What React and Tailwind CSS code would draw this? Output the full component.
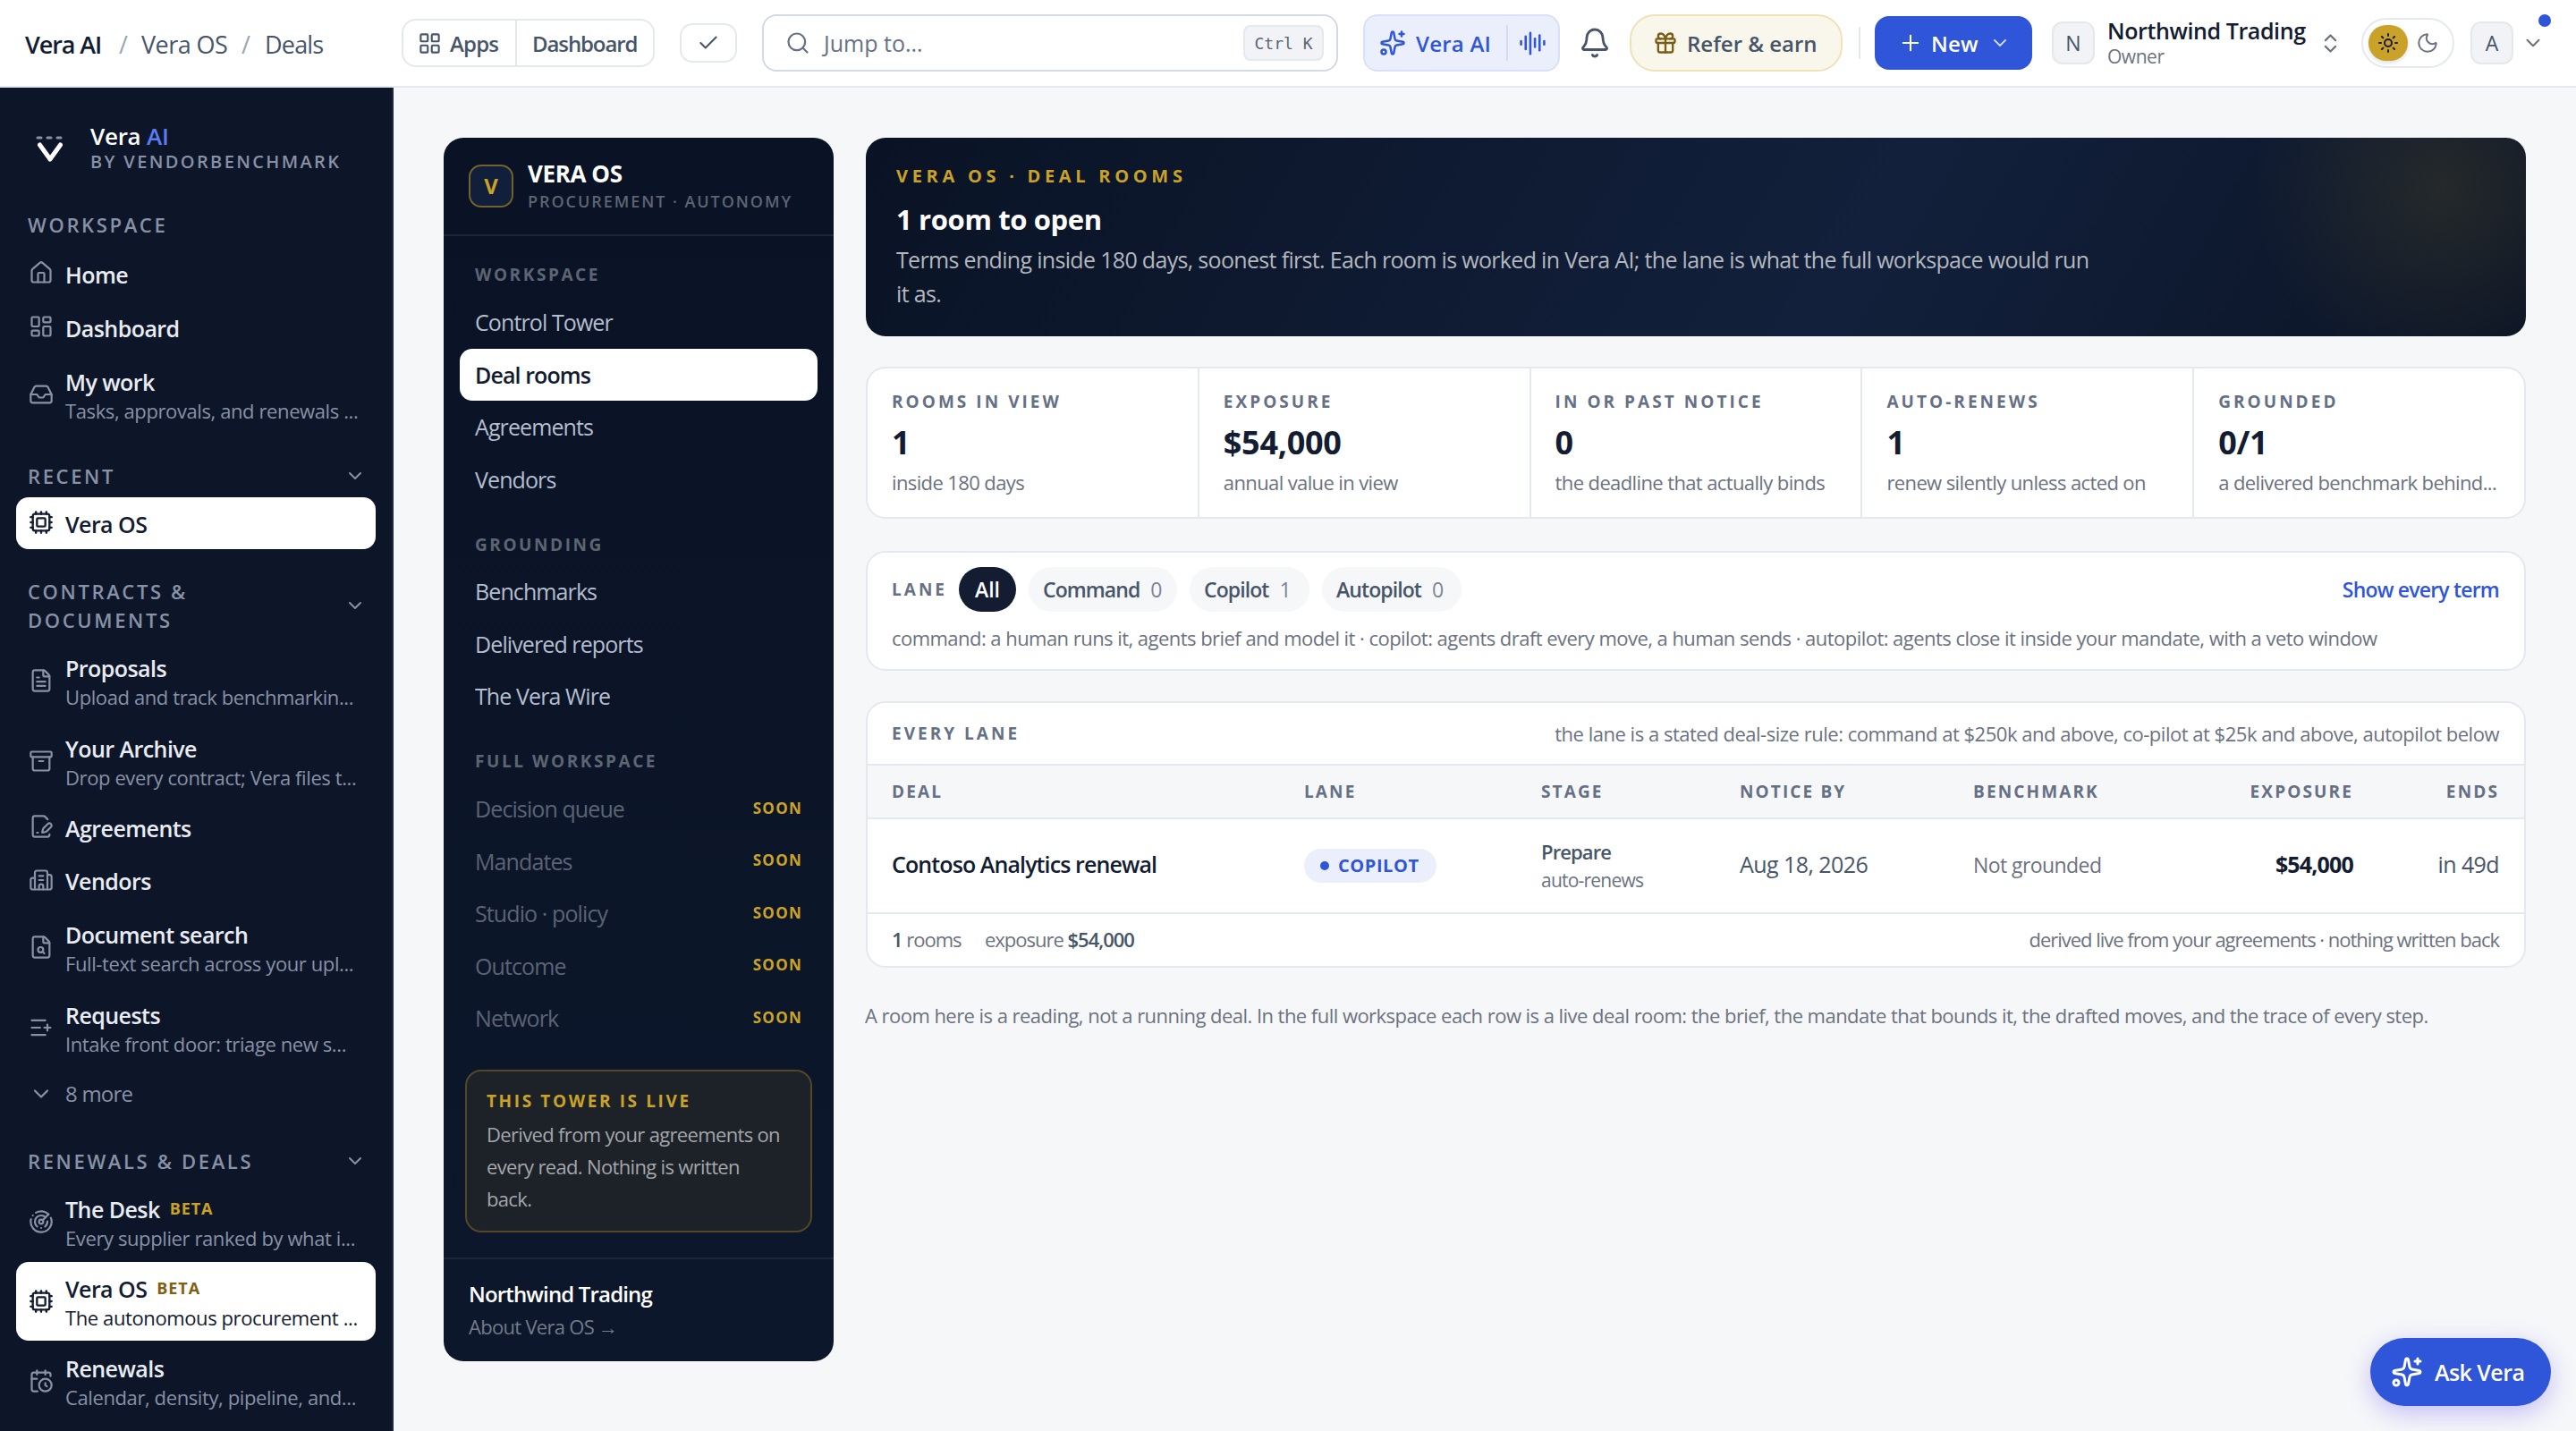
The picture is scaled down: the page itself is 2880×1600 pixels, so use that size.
import React from "react";
import {
  Archive, AudioLines, Bell, Building2, CalendarClock, Check, ChevronDown, ChevronsUpDown, Cpu, FilePenLine,
  FileSearch, FileText, Gift, House, Inbox, LayoutDashboard, LayoutGrid, ListPlus, Moon, Plus, Radar, Search,
  Sparkles, Sun,
} from "lucide-react";

/* ---------- Top bar ---------- */

function TopBar() {
  return (
    <header className="flex h-[98px] shrink-0 items-center border-b-2 border-[#e4e8ef] bg-white">
      <nav className="ml-[28px] flex w-[421px] items-center pt-[4px] text-[27px] leading-[40px] tracking-[-0.03em] text-[#475569]">
        <span className="w-[105px] font-semibold tracking-[-0.04em] text-[#131c31]">Vera AI</span>
        <span className="w-[25px] text-[#9aa3b2]">/</span>
        <span className="w-[112px] tracking-[-0.02em]">Vera OS</span>
        <span className="w-[26px] text-[#9aa3b2]">/</span>
        <span>Deals</span>
      </nav>

      <div className="flex h-[54px] w-[283px] items-center rounded-[16px] border-2 border-[#e4e8ef] text-[24px] font-semibold text-[#475569]">
        <div className="flex h-full w-[127px] items-center border-r-2 border-[#e4e8ef] pl-[16px]">
          <LayoutGrid size={27} strokeWidth={1.9} />
          <span className="ml-[9px] pt-px tracking-[-0.034em]">Apps</span>
        </div>
        <span className="ml-[17px] pt-px tracking-[-0.046em]">Dashboard</span>
      </div>

      <div className="ml-[28px] flex h-[44px] w-[64px] items-center justify-center rounded-[14px] border-2 border-[#e4e8ef] text-[#475569]">
        <Check size={26} strokeWidth={1.9} />
      </div>

      <div className="ml-[28px] flex h-[64px] w-[644px] items-center rounded-[16px] border-2 border-[#d3d9e6] pl-[24px] pr-[14px] text-[#667085]">
        <Search size={28} strokeWidth={1.9} />
        <span className="ml-[15px] grow pt-px text-[25px]">Jump to...</span>
        <kbd className="flex h-[40px] w-[90px] items-center justify-center rounded-[8px] border-2 border-[#e4e8ef] bg-[#f1f3f6] font-['DejaVu_Sans_Mono',monospace] text-[18px] text-[#5b6577]">
          Ctrl K
        </kbd>
      </div>

      <div className="ml-[28px] flex h-[64px] w-[220px] items-center rounded-[16px] border-2 border-[#d9e1fa] bg-[#ebeffc] pl-[16px] text-[#2f55d8]">
        <Sparkles size={30} strokeWidth={2} />
        <span className="ml-[11px] w-[101px] pt-px text-[24px] font-semibold tracking-[0.01em]">Vera AI</span>
        <span className="h-[40px] w-[2px] bg-[#d3dbf6]" />
        <AudioLines className="ml-[12px]" size={31} strokeWidth={2} />
      </div>

      <Bell className="ml-[21px] text-[#475569]" size={36} strokeWidth={1.9} />

      <div className="ml-[21px] flex h-[64px] w-[238px] items-center rounded-[28px] border-2 border-[#efe3b5] bg-[#f9f6ec] pl-[24px]">
        <Gift className="text-[#7a5c12]" size={28} strokeWidth={2} />
        <span className="ml-[10px] pt-px text-[24px] font-semibold text-[#475569]">Refer &amp; earn</span>
      </div>

      <span className="ml-[18px] h-[36px] w-[2px] bg-[#e4e8ef]" />

      <button className="ml-[16px] flex h-[60px] w-[176px] items-center rounded-[16px] bg-[#2f55d8] pl-[26px] text-white">
        <Plus size={28} strokeWidth={1.8} />
        <span className="ml-[9px] w-[65px] pt-px text-left text-[24px] font-semibold tracking-[0.01em]">New</span>
        <ChevronDown className="opacity-75" size={24} strokeWidth={2} />
      </button>

      <div className="ml-[22px] flex h-[48px] w-[48px] items-center justify-center rounded-[12px] border-2 border-[#e4e8ef] bg-[#f1f3f6] text-[23px] font-medium text-[#475569]">
        N
      </div>
      <div className="ml-[14px] flex w-[237px] flex-col">
        <span className="whitespace-nowrap text-[25px] font-semibold leading-[30px] tracking-[-0.016em] text-[#131c31]">Northwind Trading</span>
        <span className="text-[21px] leading-[28px] tracking-[-0.022em] text-[#6b7280]">Owner</span>
      </div>
      <ChevronsUpDown className="-ml-px text-[#6b7280]" size={27} strokeWidth={1.9} />

      <div className="ml-[21px] flex h-[56px] w-[104px] items-center rounded-full border-2 border-[#e4e8ef] pl-[6px]">
        <span className="flex h-[40px] w-[44px] items-center justify-center rounded-full bg-[#c9a227] text-[#131c31] shadow-[0_2px_4px_rgba(15,23,42,0.15)]">
          <Sun size={24} strokeWidth={2} />
        </span>
        <Moon className="ml-[9px] text-[#6b7280]" size={26} strokeWidth={1.9} />
      </div>

      <div className="relative ml-[18px] flex items-center">
        <div className="flex h-[48px] w-[48px] items-center justify-center rounded-[12px] border-2 border-[#e4e8ef] bg-[#f1f3f6] text-[23px] font-medium text-[#475569]">
          A
        </div>
        <ChevronDown className="ml-[9px] text-[#6b7280]" size={26} strokeWidth={1.9} />
        <span className="absolute -top-[8px] left-[76px] h-[14px] w-[14px] rounded-full bg-[#2f55d8]" />
      </div>
    </header>
  );
}

/* ---------- App sidebar ---------- */

function NavHeading({ children, chevron = true }) {
  return (
    <div className="flex items-center justify-between pl-[31px] pr-[29px] text-[#8891a5]">
      <span className="w-[260px] text-[22px] font-semibold leading-[32px] tracking-[0.12em]">{children}</span>
      {chevron && <ChevronDown size={24} strokeWidth={2} />}
    </div>
  );
}

function NavItem({ icon: Icon, title, sub, beta, active }) {
  const tone = active ? "bg-white" : "";
  return (
    <div className={`mx-[18px] flex items-center rounded-[14px] pl-[14px] ${sub ? "h-[88px]" : "h-[58px]"} ${tone}`}>
      <Icon
        className={`shrink-0 ${sub ? "" : "-mt-[2px]"} ${active ? "text-[#131c31]" : "text-[#8891a5]"}`}
        size={28}
        strokeWidth={active ? 2 : 1.9}
      />
      <div className={`ml-[13px] flex flex-col whitespace-nowrap ${sub ? "pt-[3px]" : "pt-px"}`}>
        <span className="flex items-center">
          <span
            className={`text-[25px] font-semibold leading-[34px] tracking-[-0.022em] ${active ? "text-[#131c31]" : "text-[#e9ecf2]"}`}
          >
            {title}
          </span>
          {beta && (
            <span className={`-mt-[2px] ml-[11px] text-[18px] font-bold leading-[30px] tracking-[0.05em] ${active ? "text-[#806012]" : "text-[#c9a227]"}`}>
              BETA
            </span>
          )}
        </span>
        {sub && (
          <span className={`text-[22px] font-medium leading-[31px] tracking-[-0.018em] ${active ? "text-[#131c31]" : "text-[#8891a5]"}`}>
            {sub}
          </span>
        )}
      </div>
    </div>
  );
}

function Sidebar() {
  return (
    <aside className="flex w-[440px] shrink-0 flex-col overflow-hidden border-r-2 border-[#1d263a] bg-[#0d1629]">
      <div className="flex pl-[40px] pt-[38px]">
        <svg className="mt-[15px]" width="32" height="32" viewBox="0 0 32 32" fill="none" strokeLinecap="round">
          <path d="M2 3h4M13 3h4M24 3h4" stroke="#8891a5" strokeWidth="3" />
          <path d="M4.500 11l11.500 16L27.500 11" stroke="#fff" strokeWidth="5" strokeLinejoin="round" />
        </svg>
        <div className="ml-[29px] flex flex-col whitespace-nowrap">
          <span className="text-[26px] font-semibold leading-[32px] tracking-[-0.01em] text-white">
            Vera <span className="text-[#5a7cf0]">AI</span>
          </span>
          <span className="text-[20px] font-semibold leading-[26px] tracking-[0.119em] text-[#8891a5]">BY VENDORBENCHMARK</span>
        </div>
      </div>

      <div className="mb-[10px] mt-[41px]"><NavHeading chevron={false}>WORKSPACE</NavHeading></div>
      <div className="flex flex-col gap-[2px]">
        <NavItem icon={House} title="Home" />
        <NavItem icon={LayoutDashboard} title="Dashboard" />
        <NavItem icon={Inbox} title="My work" sub="Tasks, approvals, and renewals ..." />
      </div>

      <div className="mb-[8px] mt-[31px]"><NavHeading>RECENT</NavHeading></div>
      <NavItem icon={Cpu} title="Vera OS" active />

      <div className="mb-[8px] mt-[31px]"><NavHeading>CONTRACTS &amp;<br />DOCUMENTS</NavHeading></div>
      <div className="flex flex-col gap-[1.500px]">
        <NavItem icon={FileText} title="Proposals" sub="Upload and track benchmarkin..." />
        <NavItem icon={Archive} title="Your Archive" sub="Drop every contract; Vera files t..." />
        <NavItem icon={FilePenLine} title="Agreements" />
        <NavItem icon={Building2} title="Vendors" />
        <NavItem icon={FileSearch} title="Document search" sub="Full-text search across your upl..." />
        <NavItem icon={ListPlus} title="Requests" sub="Intake front door: triage new s..." />
      </div>
      <div className="mt-[4px] flex h-[52px] items-center pl-[32px] text-[#8891a5]">
        <ChevronDown size={28} strokeWidth={1.9} />
        <span className="ml-[13px] text-[24px] font-medium tracking-[-0.032em]">8 more</span>
      </div>

      <div className="mb-[8px] mt-[33px]"><NavHeading>RENEWALS &amp; DEALS</NavHeading></div>
      <div className="flex flex-col gap-px">
        <NavItem icon={Radar} title="The Desk" sub="Every supplier ranked by what i..." beta />
        <NavItem icon={Cpu} title="Vera OS" sub="The autonomous procurement ..." beta active />
        <NavItem icon={CalendarClock} title="Renewals" sub="Calendar, density, pipeline, and..." />
      </div>
    </aside>
  );
}

/* ---------- Vera OS panel ---------- */

function OsGroup({ label, items, soon }) {
  return (
    <section className="pt-[29.400px]">
      <h3 className="ml-[35px] text-[19px] font-bold leading-[28px] tracking-[0.135em] text-[#5d6573]">{label}</h3>
      <div className="mt-[10.400px] flex flex-col gap-[0.500px]">
        {items.map((name) => {
          const active = name === "Deal rooms";
          return (
            <div
              key={name}
              className={`mx-[18px] flex h-[58px] items-center justify-between rounded-[14px] px-[17px] text-[25px] tracking-[-0.036em] ${
                active ? "bg-white font-semibold text-[#131c31]" : soon ? "text-[#5b6473]" : "text-[#b4becf]"
              }`}
            >
              <span>{name}</span>
              {soon && <span className="-mt-[3px] text-[17px] font-bold tracking-[0.074em] text-[#c9a227]">SOON</span>}
            </div>
          );
        })}
      </div>
    </section>
  );
}

function OsPanel() {
  return (
    <aside className="flex h-[1368px] w-[436px] shrink-0 flex-col rounded-[22px] bg-linear-to-b from-[#0a1325] to-[#0d172b]">
      <div className="flex h-[110px] items-center border-b-2 border-[#1e273a] pl-[28px]">
        <div className="flex h-[48px] w-[50px] items-center justify-center rounded-[14px] border-2 border-[#73622b] bg-[#121f3a] text-[24px] font-bold text-[#c9a227]">
          V
        </div>
        <div className="ml-[16px] flex flex-col gap-[3px] whitespace-nowrap">
          <span className="text-[26px] font-bold leading-[30px] tracking-[-0.015em] text-white">VERA OS</span>
          <span className="text-[18px] font-semibold leading-[26px] tracking-[0.108em] text-[#5d6573]">PROCUREMENT · AUTONOMY</span>
        </div>
      </div>

      <OsGroup label="WORKSPACE" items={["Control Tower", "Deal rooms", "Agreements", "Vendors"]} />
      <OsGroup label="GROUNDING" items={["Benchmarks", "Delivered reports", "The Vera Wire"]} />
      <OsGroup label="FULL WORKSPACE" items={["Decision queue", "Mandates", "Studio · policy", "Outcome", "Network"]} soon />

      <div className="mx-[24px] mt-[28px] h-[182px] rounded-[18px] border-2 border-[#544725] bg-[#1d2228] px-[22px] pt-[19px]">
        <div className="text-[19px] font-bold leading-[28px] tracking-[0.138em] text-[#c9a227]">THIS TOWER IS LIVE</div>
        <p className="mt-[5px] text-[22px] leading-[36px] tracking-[-0.03em] text-[#a3a6aa]">
          Derived from your agreements on<br />every read. Nothing is written<br />back.
        </p>
      </div>

      <div className="mt-[28px] border-t-2 border-[#1e273a] pl-[28px] pt-[22.500px]">
        <div className="text-[24px] font-semibold leading-[34px] tracking-[-0.035em] text-white">Northwind Trading</div>
        <div className="mt-[3px] text-[22px] leading-[32px] tracking-[-0.032em] text-[#737b89]">About Vera OS →</div>
      </div>
    </aside>
  );
}

/* ---------- Main column ---------- */

function Hero() {
  return (
    <section className="h-[222px] rounded-[22px] bg-[radial-gradient(circle_380px_at_95%_26%,rgba(201,162,39,0.13),rgba(201,162,39,0)_56%),linear-gradient(120deg,#0a1325_0%,#12203b_60%,#0b1426_100%)] pl-[34px] pt-[29px]">
      <div className="text-[20px] font-bold leading-[28px] tracking-[0.235em] text-[#c9a227]">VERA OS · DEAL ROOMS</div>
      <h1 className="mt-[13px] text-[31px] font-bold leading-[42px] tracking-[-0.012em] text-white">1 room to open</h1>
      <p className="mt-[5px] text-[25px] leading-[38px] tracking-[-0.027em] text-[#b3b7bf]">
        Terms ending inside 180 days, soonest first. Each room is worked in Vera AI; the lane is what the full workspace would run<br />it as.
      </p>
    </section>
  );
}

const STATS = [
  ["ROOMS IN VIEW", "1", "inside 180 days"],
  ["EXPOSURE", "$54,000", "annual value in view"],
  ["IN OR PAST NOTICE", "0", "the deadline that actually binds"],
  ["AUTO-RENEWS", "1", "renew silently unless acted on"],
  ["GROUNDED", "0/1", "a delivered benchmark behind..."],
];

function Stats() {
  return (
    <section className="mt-[34px] grid h-[170px] grid-cols-5 gap-[2px] overflow-hidden rounded-[22px] border-2 border-[#e4e8ef] bg-[#e4e8ef]">
      {STATS.map(([label, value, note]) => (
        <div key={label} className="flex flex-col whitespace-nowrap bg-white pl-[27px] pt-[23px]">
          <span className="text-[19px] font-bold leading-[28px] tracking-[0.16em] text-[#667085]">{label}</span>
          <span className="mt-[10px] text-[36px] font-bold leading-[44px] tracking-[-0.008em] text-[#131c31]">{value}</span>
          <span className="mt-[6px] text-[22px] leading-[32px] tracking-[-0.028em] text-[#6b7280]">{note}</span>
        </div>
      ))}
    </section>
  );
}

const LANES = [
  ["Command", "0", "w-[166px]"],
  ["Copilot", "1", "w-[134px]"],
  ["Autopilot", "0", "w-[156px]"],
];

function LaneFilter() {
  return (
    <section className="mt-[36px] h-[134px] rounded-[22px] border-2 border-[#e4e8ef] bg-white pl-[27px] pr-[28px] pt-[16px]">
      <div className="flex h-[50px] items-center text-[23px] font-semibold">
        <span className="w-[75px] text-[19px] font-bold tracking-[0.159em] text-[#667085]">LANE</span>
        <span className="flex h-full w-[64px] items-center justify-center rounded-full bg-[#131c31] text-white">All</span>
        <div className="ml-[14px] flex h-full gap-[14px]">
          {LANES.map(([name, count, width]) => (
            <span key={name} className={`flex items-center rounded-full bg-[#f6f7f9] pl-[16px] tracking-[-0.04em] text-[#475569] ${width}`}>
              {name}
              <span className="ml-[12px] font-medium text-[#7b8698]">{count}</span>
            </span>
          ))}
        </div>
        <span className="ml-auto tracking-[-0.035em] text-[#2f55d8]">Show every term</span>
      </div>
      <p className="mt-[13px] whitespace-nowrap text-[22px] leading-[32px] tracking-[-0.0245em] text-[#6b7280]">
        command: a human runs it, agents brief and model it · copilot: agents draft every move, a human sends · autopilot: agents close it inside your mandate, with a veto window
      </p>
    </section>
  );
}

const COLS = "grid grid-cols-[461px_265px_222px_261px_200px_225px_163px] items-center pl-[27px]";

function DealTable() {
  return (
    <section className="mt-[34px] overflow-hidden rounded-[22px] border-2 border-[#e4e8ef] bg-white">
      <div className="flex h-[68px] items-center justify-between pl-[27px] pr-[28px]">
        <span className="text-[19px] font-bold tracking-[0.159em] text-[#667085]">EVERY LANE</span>
        <span className="text-[22px] tracking-[-0.022em] text-[#6b7280]">
          the lane is a stated deal-size rule: command at $250k and above, co-pilot at $25k and above, autopilot below
        </span>
      </div>
      <div className={`${COLS} h-[62px] border-y-2 border-[#e4e8ef] bg-[#f6f7f9] text-[19px] font-bold tracking-[0.112em] text-[#667085]`}>
        <span>DEAL</span>
        <span>LANE</span>
        <span>STAGE</span>
        <span>NOTICE BY</span>
        <span>BENCHMARK</span>
        <span className="text-right">EXPOSURE</span>
        <span className="text-right">ENDS</span>
      </div>
      <div className={`${COLS} h-[104px] text-[25px] text-[#475569]`}>
        <span className="-mt-[3px] font-semibold tracking-[-0.036em] text-[#131c31]">Contoso Analytics renewal</span>
        <span className="flex h-[38px] w-[148px] items-center rounded-full bg-[#ebeffc] pl-[18px] text-[20px] font-bold tracking-[0.028em] text-[#2f55d8]">
          <span className="mr-[10px] h-[10px] w-[10px] rounded-full bg-[#2f55d8]" />
          COPILOT
        </span>
        <span className="flex flex-col leading-[32px]">
          <span className="text-[22px] font-semibold tracking-[-0.04em]">Prepare</span>
          <span className="text-[21px] tracking-[-0.037em] text-[#6b7280]">auto-renews</span>
        </span>
        <span className="-mt-[3px] tracking-[-0.022em]">Aug 18, 2026</span>
        <span className="-mt-[2px] text-[23px] tracking-[-0.025em] text-[#6b7280]">Not grounded</span>
        <span className="-mt-[3px] text-right font-bold tracking-[-0.033em] text-[#131c31]">$54,000</span>
        <span className="-mt-[3px] text-right tracking-[-0.024em]">in 49d</span>
      </div>
      <div className="flex h-[60px] items-center border-t-2 border-[#e4e8ef] pb-[2px] pl-[27px] pr-[28px] text-[22px] tracking-[-0.046em] text-[#6b7280]">
        <span className="w-[104px]"><b className="font-semibold text-[#475569]">1</b> rooms</span>
        <span>exposure <b className="font-semibold text-[#475569]">$54,000</b></span>
        <span className="ml-auto">derived live from your agreements · nothing written back</span>
      </div>
    </section>
  );
}

export default function App() {
  return (
    <div className="relative flex h-[1600px] w-[2880px] flex-col overflow-hidden bg-[#f6f7f9] font-['Open_Sans','Noto_Sans',sans-serif]">
      <TopBar />
      <div className="flex min-h-0 grow">
        <Sidebar />
        <div className="flex grow items-start pl-[56px] pr-[56px] pt-[56px]">
          <OsPanel />
          <main className="ml-[36px] flex min-w-0 grow flex-col">
            <Hero />
            <Stats />
            <LaneFilter />
            <DealTable />
            <p className="-ml-px mt-[37px] whitespace-nowrap text-[22px] leading-[32px] tracking-[-0.0245em] text-[#6b7280]">
              A room here is a reading, not a running deal. In the full workspace each row is a live deal room: the brief, the mandate that bounds it, the drafted moves, and the trace of every step.
            </p>
          </main>
        </div>
      </div>
      <button className="absolute bottom-[28px] right-[28px] flex h-[76px] w-[202px] items-center rounded-full bg-[#2f55d8] pl-[23px] text-white shadow-[0_8px_28px_rgba(80,60,240,0.3)]">
        <Sparkles size={36} strokeWidth={2} />
        <span className="ml-[13px] pt-[2px] text-[25px] font-semibold tracking-[-0.022em]">Ask Vera</span>
      </button>
    </div>
  );
}
